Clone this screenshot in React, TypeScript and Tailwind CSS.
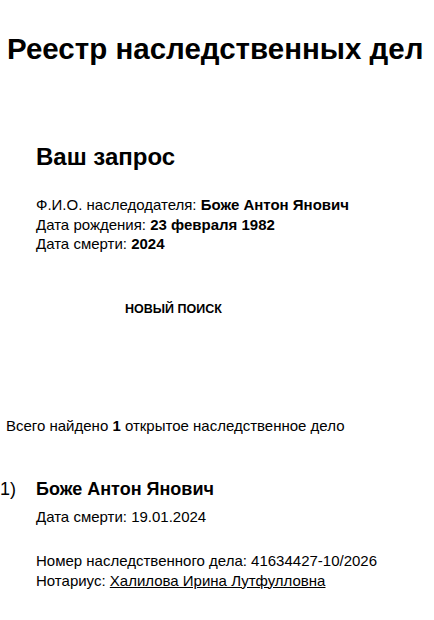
export default function App() {
  return (
    <div className="min-h-[620px] bg-white text-black font-['Liberation_Sans',Arial,sans-serif]">
      <h1 className="pl-[7px] pt-[33px] text-[29.5px] leading-[32px] font-bold">
        Реестр наследственных дел
      </h1>

      <section className="pl-[36px] pt-[79px]">
        <h2 className="text-[24px] leading-[26px] font-bold">Ваш запрос</h2>
        <div className="mt-[25px] text-[15px] leading-[19.5px]">
          <p>
            Ф.И.О. наследодателя: <b>Боже Антон Янович</b>
          </p>
          <p>
            Дата рождения: <b>23 февраля 1982</b>
          </p>
          <p>
            Дата смерти: <b>2024</b>
          </p>
        </div>
      </section>

      <div className="pl-[125px] pt-[42px]">
        <button className="text-[12.5px] leading-[16px] font-bold uppercase">Новый поиск</button>
      </div>

      <p className="pl-[6px] pt-[96px] text-[15px] leading-[20px]">
        Всего найдено <b>1</b> открытое наследственное дело
      </p>

      <div className="flex pt-[42px]">
        <span className="w-[36px] text-[18px] leading-[22px]">1)</span>
        <div className="text-[15px] leading-[20px]">
          <p className="text-[18px] leading-[22px] font-bold">Боже Антон Янович</p>
          <p className="mt-[7px]">Дата смерти: 19.01.2024</p>
          <p className="mt-[24px]">Номер наследственного дела: 41634427-10/2026</p>
          <p>
            Нотариус: <a href="#" className="underline">Халилова Ирина Лутфулловна</a>
          </p>
        </div>
      </div>
    </div>
  );
}
